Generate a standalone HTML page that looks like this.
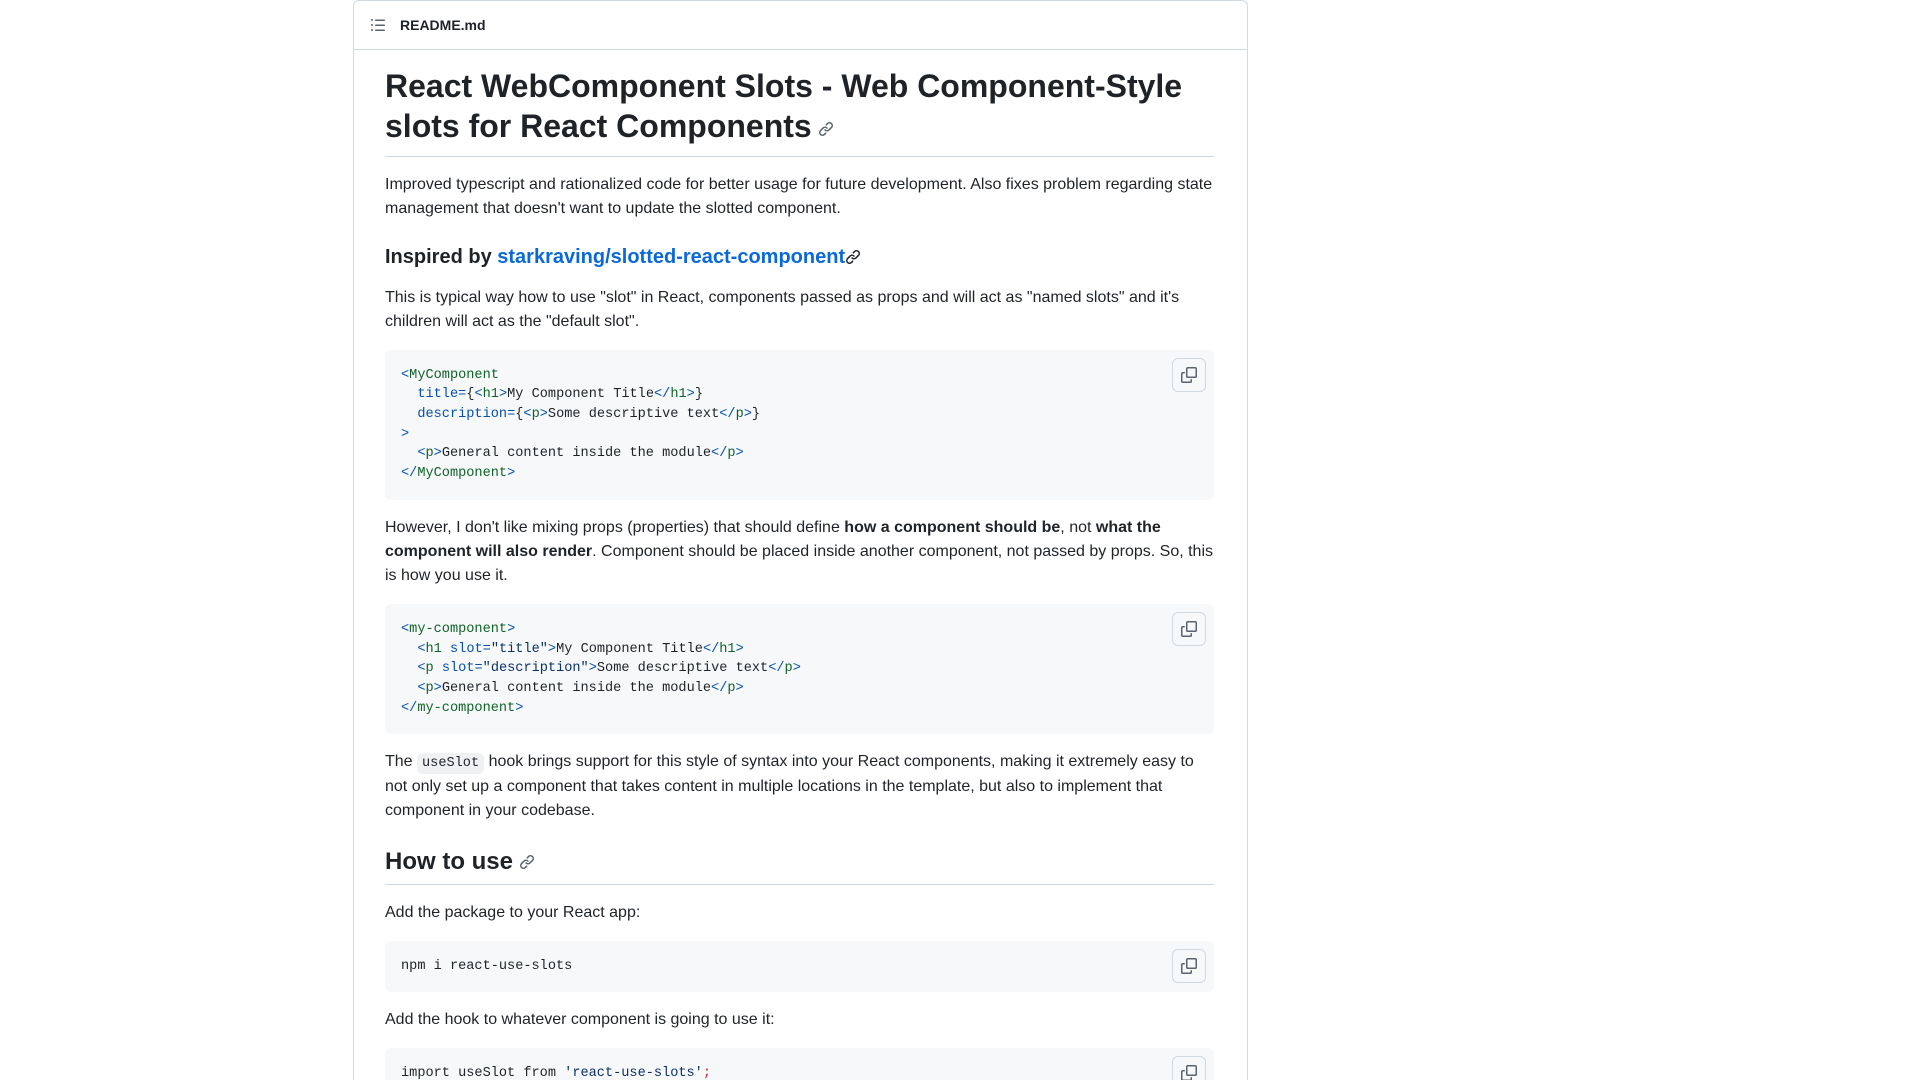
<!DOCTYPE html>
<html><head><meta charset="utf-8"><style>
html,body{height:1080px;overflow:hidden}
body{margin:0;background:#fff;font-family:"Liberation Sans",sans-serif;color:#1f2328;font-size:16px;line-height:1.5;}
.box{position:absolute;left:353px;top:0;width:893px;height:1079px;overflow:hidden;border:1px solid #d1d9e0;border-bottom:none;border-radius:6px 6px 0 0;}
.hdr{height:48px;border-bottom:1px solid #d1d9e0;display:flex;align-items:center;padding-left:16px;font-size:14px;font-weight:600;}
.hdr svg{margin-right:14px}
.art{padding:16px 33px 0 31px;}
h1{font-size:32px;font-weight:600;line-height:1.25;margin:0 0 16px;padding-bottom:9.6px;border-bottom:1px solid #d1d9e0;}
h2{font-size:24px;font-weight:600;line-height:1.25;margin:24px 0 16px;padding-bottom:7px;border-bottom:1px solid #d1d9e0;}
h3{font-size:20px;font-weight:600;line-height:1.25;margin:24px 0 16px;}
p{margin:0 0 16px}
a{color:#0969da;text-decoration:none}
.pre{position:relative;background:#f6f8fa;border-radius:6px;padding:16px;margin:0 0 16px;font-family:"Liberation Mono",monospace;font-size:13.6px;line-height:1.45;white-space:pre;}
.cp{position:absolute;right:8px;top:8px;width:32px;height:32px;border:1px solid #d1d9e0;border-radius:6px;background:#f6f8fa;display:flex;align-items:center;justify-content:center}
.t{color:#116329}.a{color:#0550ae}.s{color:#0a3069}.r{color:#cf222e}
code{font-family:"Liberation Mono",monospace;font-size:13.6px;background:#eff1f3;padding:3px 5px;border-radius:6px}
.lk{vertical-align:middle;margin-left:6px}
</style></head><body>
<div class="box">
<div class="hdr"><svg width="16" height="16" viewBox="0 0 16 16" fill="#59636e"><path d="M5.75 2.5h8.5a.75.75 0 0 1 0 1.5h-8.5a.75.75 0 0 1 0-1.5Zm0 5h8.5a.75.75 0 0 1 0 1.5h-8.5a.75.75 0 0 1 0-1.5Zm0 5h8.5a.75.75 0 0 1 0 1.5h-8.5a.75.75 0 0 1 0-1.5ZM2 14a1 1 0 1 1 0-2 1 1 0 0 1 0 2Zm1-6a1 1 0 1 1-2 0 1 1 0 0 1 2 0ZM2 4a1 1 0 1 1 0-2 1 1 0 0 1 0 2Z"/></svg>README.md</div>
<div class="art">
<h1>React WebComponent Slots - Web Component-Style slots for React Components<svg class="lk" width="16" height="16" viewBox="0 0 16 16" fill="#59636e"><path d="m7.775 3.275 1.25-1.25a3.5 3.5 0 1 1 4.95 4.95l-2.5 2.5a3.5 3.5 0 0 1-4.950 0 .751.751 0 0 1 .018-1.042.751.751 0 0 1 1.042-.018 1.998 1.998 0 0 0 2.83 0l2.5-2.5a2.002 2.002 0 0 0-2.83-2.83l-1.25 1.25a.751.751 0 0 1-1.042-.018.751.751 0 0 1-.018-1.042Zm-4.69 9.64a1.998 1.998 0 0 0 2.83 0l1.25-1.25a.751.751 0 0 1 1.042.018.751.751 0 0 1 .018 1.042l-1.25 1.25a3.5 3.5 0 1 1-4.95-4.95l2.5-2.5a3.5 3.5 0 0 1 4.95 0 .751.751 0 0 1-.018 1.042.751.751 0 0 1-1.042.018 1.998 1.998 0 0 0-2.83 0l-2.5 2.5a1.998 1.998 0 0 0 0 2.83Z"/></svg></h1>
<p>Improved typescript and rationalized code for better usage for future development. Also fixes problem regarding state management that doesn't want to update the slotted component.</p>
<h3>Inspired by <a>starkraving/slotted-react-component</a><svg width="16" height="16" viewBox="0 0 16 16" fill="#1f2328" style="vertical-align:middle"><path d="m7.775 3.275 1.25-1.25a3.5 3.5 0 1 1 4.95 4.95l-2.5 2.5a3.5 3.5 0 0 1-4.95 0 .751.751 0 0 1 .018-1.042.751.751 0 0 1 1.042-.018 1.998 1.998 0 0 0 2.83 0l2.5-2.5a2.002 2.002 0 0 0-2.83-2.83l-1.25 1.25a.751.751 0 0 1-1.042-.018.751.751 0 0 1-.018-1.042Zm-4.69 9.64a1.998 1.998 0 0 0 2.83 0l1.25-1.25a.751.751 0 0 1 1.042.018.751.751 0 0 1 .018 1.042l-1.25 1.25a3.5 3.5 0 1 1-4.95-4.95l2.5-2.5a3.5 3.5 0 0 1 4.95 0 .751.751 0 0 1-.018 1.042.751.751 0 0 1-1.042.018 1.998 1.998 0 0 0-2.83 0l-2.5 2.5a1.998 1.998 0 0 0 0 2.83Z"/></svg></h3>
<p>This is typical way how to use "slot" in React, components passed as props and will act as "named slots" and it's children will act as the "default slot".</p>
<div class="pre"><span class="a">&lt;</span><span class="t">MyComponent</span>
  <span class="a">title</span><span class="a">=</span>{<span class="a">&lt;</span><span class="t">h1</span><span class="a">&gt;</span>My Component Title<span class="a">&lt;/</span><span class="t">h1</span><span class="a">&gt;</span>}
  <span class="a">description</span><span class="a">=</span>{<span class="a">&lt;</span><span class="t">p</span><span class="a">&gt;</span>Some descriptive text<span class="a">&lt;/</span><span class="t">p</span><span class="a">&gt;</span>}
<span class="a">&gt;</span>
  <span class="a">&lt;</span><span class="t">p</span><span class="a">&gt;</span>General content inside the module<span class="a">&lt;/</span><span class="t">p</span><span class="a">&gt;</span>
<span class="a">&lt;/</span><span class="t">MyComponent</span><span class="a">&gt;</span><div class="cp"><svg width="16" height="16" viewBox="0 0 16 16" fill="#59636e"><path d="M0 6.75C0 5.784.784 5 1.75 5h1.5a.75.75 0 0 1 0 1.5h-1.5a.25.25 0 0 0-.25.25v7.5c0 .138.112.25.25.25h7.5a.25.25 0 0 0 .25-.25v-1.5a.75.75 0 0 1 1.5 0v1.5A1.75 1.75 0 0 1 9.25 16h-7.5A1.75 1.75 0 0 1 0 14.25Z"/><path d="M5 1.75C5 .784 5.784 0 6.75 0h7.5C15.216 0 16 .784 16 1.75v7.5A1.75 1.75 0 0 1 14.25 11h-7.5A1.75 1.75 0 0 1 5 9.25Zm1.75-.25a.25.25 0 0 0-.25.25v7.5c0 .138.112.25.25.25h7.5a.25.25 0 0 0 .25-.25v-7.5a.25.25 0 0 0-.25-.25Z"/></svg></div></div>
<p>However, I don't like mixing props (properties) that should define <b>how a component should be</b>, not <b>what the component will also render</b>. Component should be placed inside another component, not passed by props. So, this is how you use it.</p>
<div class="pre"><span class="a">&lt;</span><span class="t">my-component</span><span class="a">&gt;</span>
  <span class="a">&lt;</span><span class="t">h1</span> <span class="a">slot</span><span class="a">=</span><span class="s">"title"</span><span class="a">&gt;</span>My Component Title<span class="a">&lt;/</span><span class="t">h1</span><span class="a">&gt;</span>
  <span class="a">&lt;</span><span class="t">p</span> <span class="a">slot</span><span class="a">=</span><span class="s">"description"</span><span class="a">&gt;</span>Some descriptive text<span class="a">&lt;/</span><span class="t">p</span><span class="a">&gt;</span>
  <span class="a">&lt;</span><span class="t">p</span><span class="a">&gt;</span>General content inside the module<span class="a">&lt;/</span><span class="t">p</span><span class="a">&gt;</span>
<span class="a">&lt;/</span><span class="t">my-component</span><span class="a">&gt;</span><div class="cp"><svg width="16" height="16" viewBox="0 0 16 16" fill="#59636e"><path d="M0 6.75C0 5.784.784 5 1.75 5h1.5a.75.75 0 0 1 0 1.5h-1.5a.25.25 0 0 0-.25.25v7.5c0 .138.112.25.25.25h7.5a.25.25 0 0 0 .25-.25v-1.5a.75.75 0 0 1 1.5 0v1.5A1.75 1.75 0 0 1 9.25 16h-7.5A1.75 1.75 0 0 1 0 14.25Z"/><path d="M5 1.75C5 .784 5.784 0 6.75 0h7.5C15.216 0 16 .784 16 1.75v7.5A1.75 1.75 0 0 1 14.25 11h-7.5A1.75 1.75 0 0 1 5 9.25Zm1.75-.25a.25.25 0 0 0-.25.25v7.5c0 .138.112.25.25.25h7.5a.25.25 0 0 0 .25-.25v-7.5a.25.25 0 0 0-.25-.25Z"/></svg></div></div>
<p>The <code>useSlot</code> hook brings support for this style of syntax into your React components, making it extremely easy to not only set up a component that takes content in multiple locations in the template, but also to implement that component in your codebase.</p>
<h2>How to use<svg class="lk" width="16" height="16" viewBox="0 0 16 16" fill="#59636e"><path d="m7.775 3.275 1.25-1.25a3.5 3.5 0 1 1 4.95 4.95l-2.5 2.5a3.5 3.5 0 0 1-4.95 0 .751.751 0 0 1 .018-1.042.751.751 0 0 1 1.042-.018 1.998 1.998 0 0 0 2.83 0l2.5-2.5a2.002 2.002 0 0 0-2.83-2.83l-1.25 1.25a.751.751 0 0 1-1.042-.018.751.751 0 0 1-.018-1.042Zm-4.69 9.64a1.998 1.998 0 0 0 2.83 0l1.25-1.25a.751.751 0 0 1 1.042.018.751.751 0 0 1 .018 1.042l-1.25 1.25a3.5 3.5 0 1 1-4.95-4.95l2.5-2.5a3.5 3.5 0 0 1 4.95 0 .751.751 0 0 1-.018 1.042.751.751 0 0 1-1.042.018 1.998 1.998 0 0 0-2.83 0l-2.5 2.5a1.998 1.998 0 0 0 0 2.83Z"/></svg></h2>
<p>Add the package to your React app:</p>
<div class="pre">npm i react-use-slots<div class="cp"><svg width="16" height="16" viewBox="0 0 16 16" fill="#59636e"><path d="M0 6.75C0 5.784.784 5 1.75 5h1.5a.75.75 0 0 1 0 1.5h-1.5a.25.25 0 0 0-.25.25v7.5c0 .138.112.25.25.25h7.5a.25.25 0 0 0 .25-.25v-1.5a.75.75 0 0 1 1.5 0v1.5A1.75 1.75 0 0 1 9.25 16h-7.5A1.75 1.75 0 0 1 0 14.25Z"/><path d="M5 1.75C5 .784 5.784 0 6.75 0h7.5C15.216 0 16 .784 16 1.75v7.5A1.75 1.75 0 0 1 14.25 11h-7.5A1.75 1.75 0 0 1 5 9.25Zm1.75-.25a.25.25 0 0 0-.25.25v7.5c0 .138.112.25.25.25h7.5a.25.25 0 0 0 .25-.25v-7.5a.25.25 0 0 0-.25-.25Z"/></svg></div></div>
<p>Add the hook to whatever component is going to use it:</p>
<div class="pre">import useSlot from <span class="s">'react-use-slots'</span><span class="r">;</span><div class="cp"><svg width="16" height="16" viewBox="0 0 16 16" fill="#59636e"><path d="M0 6.75C0 5.784.784 5 1.75 5h1.5a.75.75 0 0 1 0 1.5h-1.5a.25.25 0 0 0-.25.25v7.5c0 .138.112.25.25.25h7.5a.25.25 0 0 0 .25-.25v-1.5a.75.75 0 0 1 1.5 0v1.5A1.75 1.75 0 0 1 9.25 16h-7.5A1.75 1.75 0 0 1 0 14.25Z"/><path d="M5 1.75C5 .784 5.784 0 6.75 0h7.5C15.216 0 16 .784 16 1.75v7.5A1.75 1.75 0 0 1 14.25 11h-7.5A1.75 1.75 0 0 1 5 9.25Zm1.75-.25a.25.25 0 0 0-.25.25v7.5c0 .138.112.25.25.25h7.5a.25.25 0 0 0 .25-.25v-7.5a.25.25 0 0 0-.25-.25Z"/></svg></div>
</div>
</div>
</div>
</body></html>
